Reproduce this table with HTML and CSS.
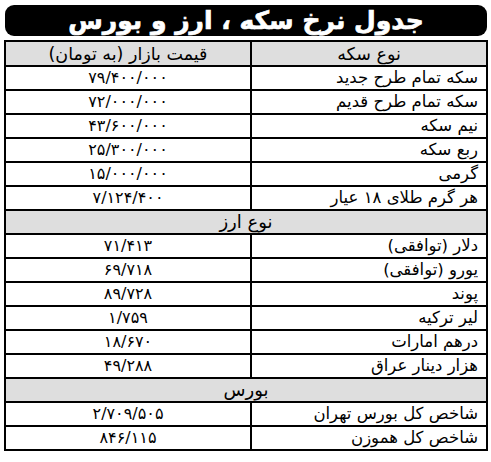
FILE: index.html
```html
<!DOCTYPE html>
<html lang="fa" dir="rtl">
<head>
<meta charset="utf-8">
<link rel="stylesheet" href="styles.css">
</head>
<body>
<div class="page">
  <div class="title">جدول نرخ سکه ، ارز و بورس</div>
  <table class="rates">
    <colgroup><col class="c-name"><col class="c-price"></colgroup>
    <tr class="head"><td>نوع سکه</td><td>قیمت بازار (به تومان)</td></tr>
    <tr><td class="name">سکه تمام طرح جدید</td><td class="price">۷۹/۴۰۰/۰۰۰</td></tr>
    <tr><td class="name">سکه تمام طرح قدیم</td><td class="price">۷۲/۰۰۰/۰۰۰</td></tr>
    <tr><td class="name">نیم سکه</td><td class="price">۴۳/۶۰۰/۰۰۰</td></tr>
    <tr><td class="name">ربع سکه</td><td class="price">۲۵/۳۰۰/۰۰۰</td></tr>
    <tr><td class="name">گرمی</td><td class="price">۱۵/۰۰۰/۰۰۰</td></tr>
    <tr><td class="name">هر گرم طلای ۱۸ عیار</td><td class="price">۷/۱۲۴/۴۰۰</td></tr>
    <tr class="section"><td colspan="2">نوع ارز</td></tr>
    <tr><td class="name">دلار (توافقی)</td><td class="price">۷۱/۴۱۳</td></tr>
    <tr><td class="name">یورو (توافقی)</td><td class="price">۶۹/۷۱۸</td></tr>
    <tr><td class="name">پوند</td><td class="price">۸۹/۷۲۸</td></tr>
    <tr><td class="name">لیر ترکیه</td><td class="price">۱/۷۵۹</td></tr>
    <tr><td class="name">درهم امارات</td><td class="price">۱۸/۶۷۰</td></tr>
    <tr><td class="name">هزار دینار عراق</td><td class="price">۴۹/۲۸۸</td></tr>
    <tr class="section"><td colspan="2">بورس</td></tr>
    <tr><td class="name">شاخص کل بورس تهران</td><td class="price">۲/۷۰۹/۵۰۵</td></tr>
    <tr><td class="name">شاخص کل هموزن</td><td class="price">۸۴۶/۱۱۵</td></tr>
  </table>
</div>
</body>
</html>
```
FILE: styles.css
```css
html, body {
  margin: 0;
  padding: 0;
  background: #ffffff;
}
.page {
  padding: 5px 4px 0 5px;
  font-family: "DejaVu Sans", "Noto Sans", sans-serif;
  color: #000;
}
.title {
  width: 482px;
  height: 31px;
  background: #000;
  color: #fff;
  border-radius: 9px;
  font-weight: bold;
  font-size: 25px;
  line-height: 31px;
  text-align: center;
  -webkit-text-stroke: 0.7px #fff;
}
.rates {
  margin-top: 4px;
  margin-right: -1px;
  width: 482px;
  border-collapse: collapse;
  table-layout: fixed;
  font-size: 16.5px;
}
.c-name { width: 236px; }
.c-price { width: 246px; }
.rates td {
  border: 2px solid #000;
  height: 22px;
  padding: 0 8px;
  line-height: 20px;
  white-space: nowrap;
}
.rates td.name { text-align: right; }
.rates td.price {
  text-align: center;
  font-size: 16px;
}
.rates tr.head td {
  background: #dedede;
  text-align: center;
  height: 23px;
  font-size: 17.5px;
}
.rates tr.section td {
  background: #dedede;
  text-align: center;
  font-size: 18px;
}
```
